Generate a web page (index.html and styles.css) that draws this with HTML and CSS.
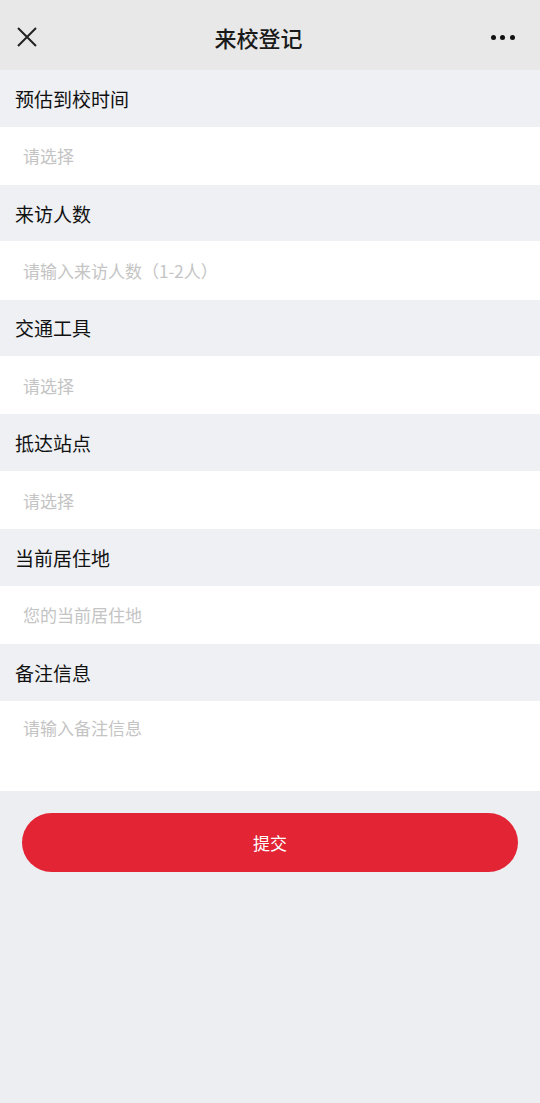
FILE: index.html
```html
<!DOCTYPE html>
<html lang="zh-CN">
<head>
    <meta charset="UTF-8">
    <meta name="viewport" content="width=device-width, initial-scale=1.0">
    <title>来校登记</title>
    <link rel="stylesheet" href="styles.css">
</head>
<body>

<header class="nav-bar">
    <span class="nav-close">
        <svg width="22" height="22" viewBox="0 0 22 22">
            <path d="M2 2 L20 20 M20 2 L2 20" stroke="#222" stroke-width="2" fill="none"/>
        </svg>
    </span>
    <div class="nav-title">来校登记</div>
    <span class="nav-more">
        <i></i><i></i><i></i>
    </span>
</header>

<div class="form">
    <div class="field-label">预估到校时间</div>
    <div class="field-input">请选择</div>

    <div class="field-label">来访人数</div>
    <div class="field-input">请输入来访人数（1-2人）</div>

    <div class="field-label">交通工具</div>
    <div class="field-input">请选择</div>

    <div class="field-label">抵达站点</div>
    <div class="field-input">请选择</div>

    <div class="field-label">当前居住地</div>
    <div class="field-input">您的当前居住地</div>

    <div class="field-label">备注信息</div>
    <div class="field-input field-textarea">请输入备注信息</div>
</div>

<div class="actions">
    <button class="submit-btn">提交</button>
</div>

</body>
</html>
```

FILE: styles.css
```css
/* Global */
body {
    margin: 0;
    padding: 0;
    background-color: #eceef1;
    font-family: 'Noto Sans CJK SC', 'Noto Sans', sans-serif;
    color: #111;
}

/* Nav bar */
.nav-bar {
    height: 70px;
    box-sizing: border-box;
    background-color: #e8e8e8;
    display: flex;
    align-items: center;
    justify-content: space-between;
    padding: 4px 25px 0 16px;
}

.nav-close {
    width: 22px;
    height: 22px;
    display: flex;
}

.nav-title {
    font-size: 22px;
    font-weight: 500;
    color: #1a1a1a;
    margin-right: 12px;
}

.nav-more {
    display: flex;
    gap: 4.5px;
    align-items: center;
}

.nav-more i {
    width: 5px;
    height: 5px;
    border-radius: 50%;
    background-color: #111;
}

/* Form */
.field-label {
    height: 56.6px;
    box-sizing: border-box;
    padding: 0 15px;
    display: flex;
    align-items: center;
    font-size: 19px;
    background-color: #eef0f3;
    color: #111;
}

.field-input {
    height: 58.2px;
    box-sizing: border-box;
    padding: 0 23px;
    display: flex;
    align-items: center;
    background-color: #fff;
    font-size: 17px;
    color: #c4c4c4;
}

.field-textarea {
    height: 90px;
    align-items: flex-start;
    padding-top: 14px;
}

/* Submit */
.actions {
    padding: 22px 22px;
}

.submit-btn {
    width: 100%;
    height: 59px;
    border: none;
    border-radius: 30px;
    background-color: #e22434;
    color: #fff;
    font-family: inherit;
    font-size: 17px;
    cursor: pointer;
}
```
